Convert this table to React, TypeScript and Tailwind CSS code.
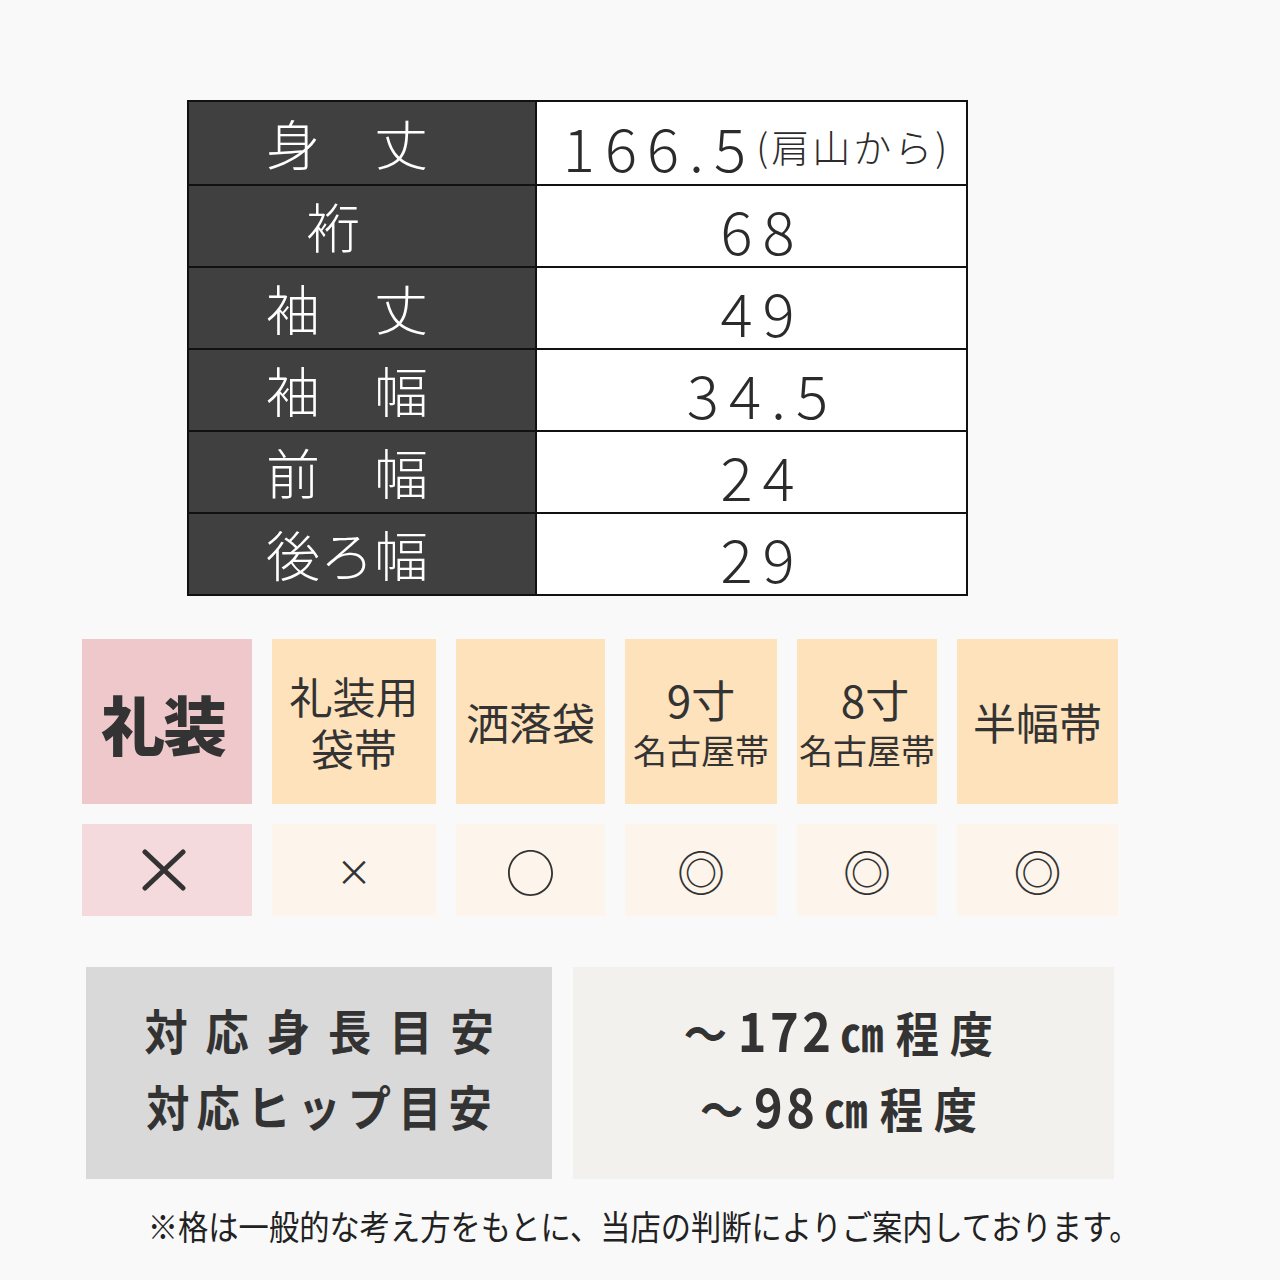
import React from 'react';

const JP = { fontFamily: '"Noto Sans CJK JP", "Noto Sans", sans-serif' };

const ROWS: { label: string; value: React.ReactNode }[] = [
  { label: '身　丈', value: <><span>166.5</span><span className="text-[38px] tracking-[3px]">(肩山から)</span></> },
  { label: '裄', value: '68' },
  { label: '袖　丈', value: '49' },
  { label: '袖　幅', value: '34.5' },
  { label: '前　幅', value: '24' },
  { label: '後ろ幅', value: '29' },
];

const OBI = [
  {
    w: 'w-[164px]',
    head: (
      <div className="flex flex-col items-center gap-[9px]">
        <div>礼装用</div>
        <div>袋帯</div>
      </div>
    ),
    mark: '×',
    markCls: 'text-[36px]',
  },
  { w: 'w-[149px]', head: <div>洒落袋</div>, mark: '○', markCls: 'text-[50px]' },
  {
    w: 'w-[152px]',
    head: (
      <div className="flex flex-col items-center gap-[12px]">
        <div className="text-[44px]">9寸</div>
        <div className="text-[34px]">名古屋帯</div>
      </div>
    ),
    mark: '◎',
    markCls: 'text-[48px]',
  },
  {
    w: 'w-[140px]',
    head: (
      <div className="flex flex-col items-center gap-[12px]">
        <div className="text-[44px] pl-[16px]">8寸</div>
        <div className="text-[34px] whitespace-nowrap">名古屋帯</div>
      </div>
    ),
    mark: '◎',
    markCls: 'text-[48px]',
  },
  { w: 'w-[161px]', head: <div>半幅帯</div>, mark: '◎', markCls: 'text-[48px]' },
];

function Range({ num }: { num: string }) {
  return (
    <div className="flex items-baseline scale-x-[0.9] whitespace-nowrap">
      <span className="mr-[12px]">～</span>
      <span className="text-[54px] tracking-[4px] mr-[6px]">{num}</span>
      <span className="mr-[14px]">㎝</span>
      <span className="tracking-[12px]">程度</span>
    </div>
  );
}

export default function App() {
  return (
    <div className="w-[1280px] h-[1280px] bg-[#f9f9f9] text-[#333333] overflow-hidden" style={JP}>
      {/* SIZE TABLE */}
      <div className="pt-[100px] pl-[187px]">
        <div className="w-[781px] border-2 border-[#111111]">
          {ROWS.map((r, i) => (
            <div key={i} className={`flex h-[82px] ${i > 0 ? 'border-t-2 border-[#111111]' : ''}`}>
              <div className={`w-[348px] bg-[#404040] border-r-2 border-[#111111] flex items-center justify-center text-white text-[54px] leading-none font-light ${i === 1 ? 'pr-[58px]' : 'pr-[30px]'}`}>
                {r.label}
              </div>
              <div className={`flex-1 bg-white flex items-center justify-center pt-[6px] text-[60px] leading-none tracking-[10px] font-light text-[#2b2b2b] ${i === 0 ? 'pl-[10px]' : 'pl-[22px]'}`}>
                {r.value}
              </div>
            </div>
          ))}
        </div>
      </div>

      {/* OBI COMPATIBILITY */}
      <div className="mt-[43px] pl-[82px] flex gap-[20px]">
        <div className="flex flex-col gap-[20px]">
          <div className="w-[170px] h-[165px] bg-[#efc8cc] flex items-center justify-center pr-[8px] text-[64px] font-black leading-none tracking-[-2px]">
            礼装
          </div>
          <div className="w-[170px] h-[92px] bg-[#f5dadd] flex items-center justify-center pr-[6px]">
            <svg width="46" height="42" viewBox="0 0 46 42">
              <path d="M4 3 L42 39 M42 3 L4 39" stroke="#333" strokeWidth="5" strokeLinecap="round" />
            </svg>
          </div>
        </div>
        {OBI.map((o, i) => (
          <div key={i} className="flex flex-col gap-[20px]">
            <div className={`${o.w} h-[165px] bg-[#fde2bc] flex items-center justify-center text-center text-[43px] leading-none`}>
              {o.head}
            </div>
            <div className={`${o.w} h-[92px] bg-[#fdf5ec] flex items-center justify-center leading-none ${o.markCls}`}>
              {o.mark}
            </div>
          </div>
        ))}
      </div>

      {/* HEIGHT GUIDE */}
      <div className="mt-[51px] pl-[86px] flex gap-[21px]">
        <div className="w-[466px] h-[212px] bg-[#d9d9d9] flex flex-col items-center justify-center gap-[28px] pb-[12px] font-bold text-[48px] leading-none">
          <div className="tracking-[20px] pl-[20px] scale-x-[0.9] whitespace-nowrap">対応身長目安</div>
          <div className="tracking-[8px] pl-[8px] scale-x-[0.9] whitespace-nowrap">対応ヒップ目安</div>
        </div>
        <div className="w-[541px] h-[212px] bg-[#f2f1ee] flex flex-col items-center justify-center gap-[22px] pb-[12px] font-bold text-[48px] leading-none">
          <Range num="172" />
          <Range num="98" />
        </div>
      </div>

      {/* NOTE */}
      <div className="mt-[30px] flex justify-center">
        <div className="text-[34px] leading-none scale-x-[0.89] whitespace-nowrap pl-[8px] text-[#222]">
          ※格は一般的な考え方をもとに、当店の判断によりご案内しております。
        </div>
      </div>
    </div>
  );
}
